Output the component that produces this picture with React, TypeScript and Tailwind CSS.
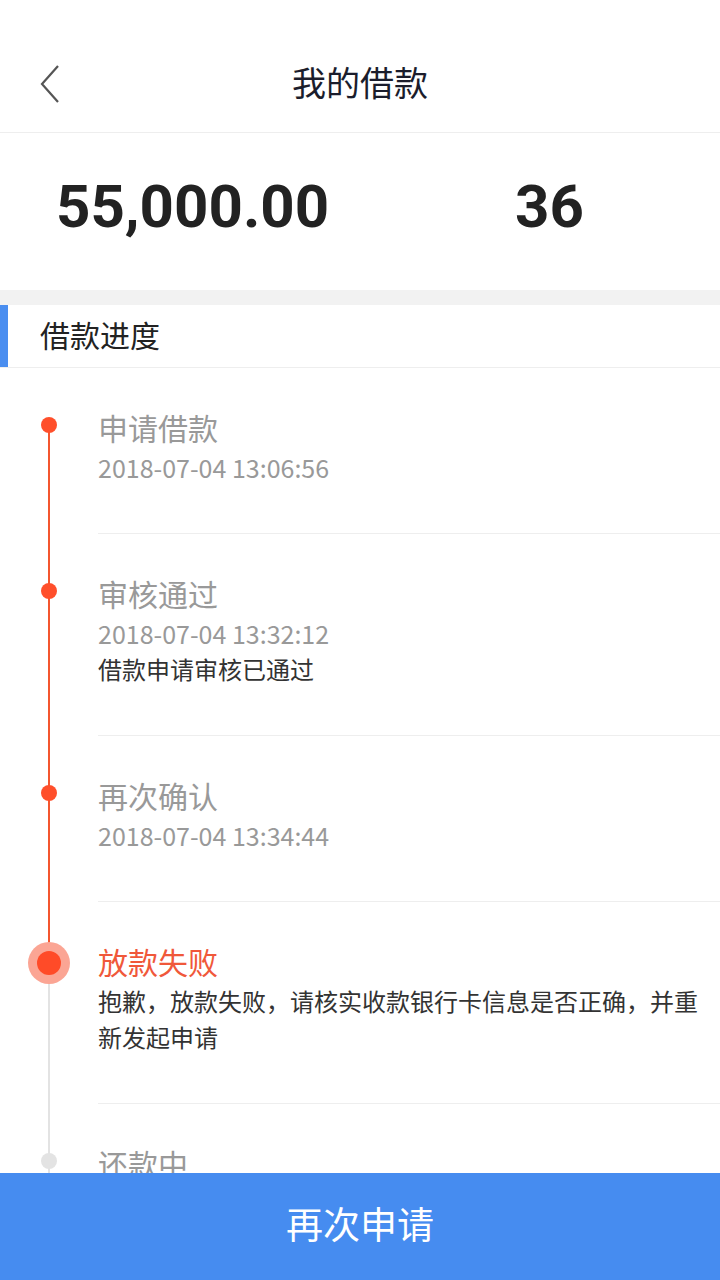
import React from 'react';

const cjk = { fontFamily: '"Noto Sans CJK SC", "Noto Sans", sans-serif' };

interface Step {
  title: string;
  time?: string;
  desc?: string;
  state: 'done' | 'current' | 'todo';
  first?: boolean;
}

const steps: Step[] = [
  { title: '申请借款', time: '2018-07-04 13:06:56', state: 'done', first: true },
  { title: '审核通过', time: '2018-07-04 13:32:12', desc: '借款申请审核已通过', state: 'done' },
  { title: '再次确认', time: '2018-07-04 13:34:44', state: 'done' },
  { title: '放款失败', desc: '抱歉，放款失败，请核实收款银行卡信息是否正确，并重新发起申请', state: 'current' },
  { title: '还款中', state: 'todo' }
];

const StepRow: React.FC<{ step: Step }> = ({ step }) => {
  const { state } = step;
  return (
    <div className="flex">
      <div className="relative w-[98px] shrink-0">
        {state === 'done' && (
          <div className={`absolute left-[48px] w-[2px] bg-[#f4562f] bottom-0 ${step.first ? 'top-[57px]' : 'top-0'}`} />
        )}
        {state === 'current' && (
          <>
            <div className="absolute left-[48px] w-[2px] bg-[#f4562f] top-0 h-[61px]" />
            <div className="absolute left-[48px] w-[2px] bg-[#e3e3e3] top-[61px] bottom-0" />
            <div className="absolute left-[28px] top-[40px] w-[42px] h-[42px] rounded-full bg-[#fba594] flex items-center justify-center">
              <div className="w-[24px] h-[24px] rounded-full bg-[#ff4b28]" />
            </div>
          </>
        )}
        {state === 'todo' && (
          <>
            <div className="absolute left-[48px] w-[2px] bg-[#e3e3e3] top-0 bottom-0" />
            <div className="absolute left-[41px] top-[49px] w-[16px] h-[16px] rounded-full bg-[#e3e3e3]" />
          </>
        )}
        {state === 'done' && (
          <div className="absolute left-[41px] top-[49px] w-[16px] h-[16px] rounded-full bg-[#ff4f2b]" />
        )}
      </div>
      <div className="flex-1 border-b border-[#eeeeee] pt-[37px] pb-[48px]">
        <div className={`text-[30px] leading-[44px] ${state === 'current' ? 'text-[#f0583a]' : 'text-[#999999]'}`}>
          {step.title}
        </div>
        {step.time && <div className="text-[25px] leading-[36px] text-[#999999]">{step.time}</div>}
        {step.desc && <div className="w-[606px] text-[24px] leading-[36px] text-[#333333]">{step.desc}</div>}
      </div>
    </div>
  );
};

export default function App() {
  return (
    <div className="w-[720px] h-[1280px] flex flex-col overflow-hidden bg-white" style={cjk}>
      <div className="h-[133px] shrink-0 border-b border-[#eeeeee] pt-[30px] flex items-center relative">
        <svg className="absolute left-[38px] top-[64px]" width="24" height="40" viewBox="0 0 24 40" fill="none">
          <path d="M20 2 L4 20 L20 38" stroke="#555555" strokeWidth="2.2" strokeLinejoin="miter" />
        </svg>
        <div className="flex-1 text-center text-[34px] text-[#1b1d2c]">我的借款</div>
      </div>

      <div className="h-[157px] shrink-0 flex items-center pb-[9px] pl-[56px] text-[#222222]" style={{ fontFamily: 'Roboto, "Liberation Sans", sans-serif' }}>
        <div className="w-[459px] text-[60px] font-bold leading-none">55,000.00</div>
        <div className="text-[60px] font-bold leading-none">36</div>
      </div>

      <div className="h-[15px] shrink-0 bg-[#f2f2f2]" />

      <div className="h-[63px] shrink-0 flex items-stretch border-b border-[#eeeeee]">
        <div className="w-[8px] bg-[#4a8ef0]" />
        <div className="flex items-center pl-[32px] pb-[3px] text-[30px] text-[#222222]">借款进度</div>
      </div>

      <div className="flex-1 overflow-hidden">
        {steps.map((s, i) => (
          <StepRow key={i} step={s} />
        ))}
      </div>

      <button className="h-[107px] shrink-0 w-full bg-[#468cf0] text-white text-[37px] flex items-center justify-center pb-[6px]" style={cjk}>
        再次申请
      </button>
    </div>
  );
}
